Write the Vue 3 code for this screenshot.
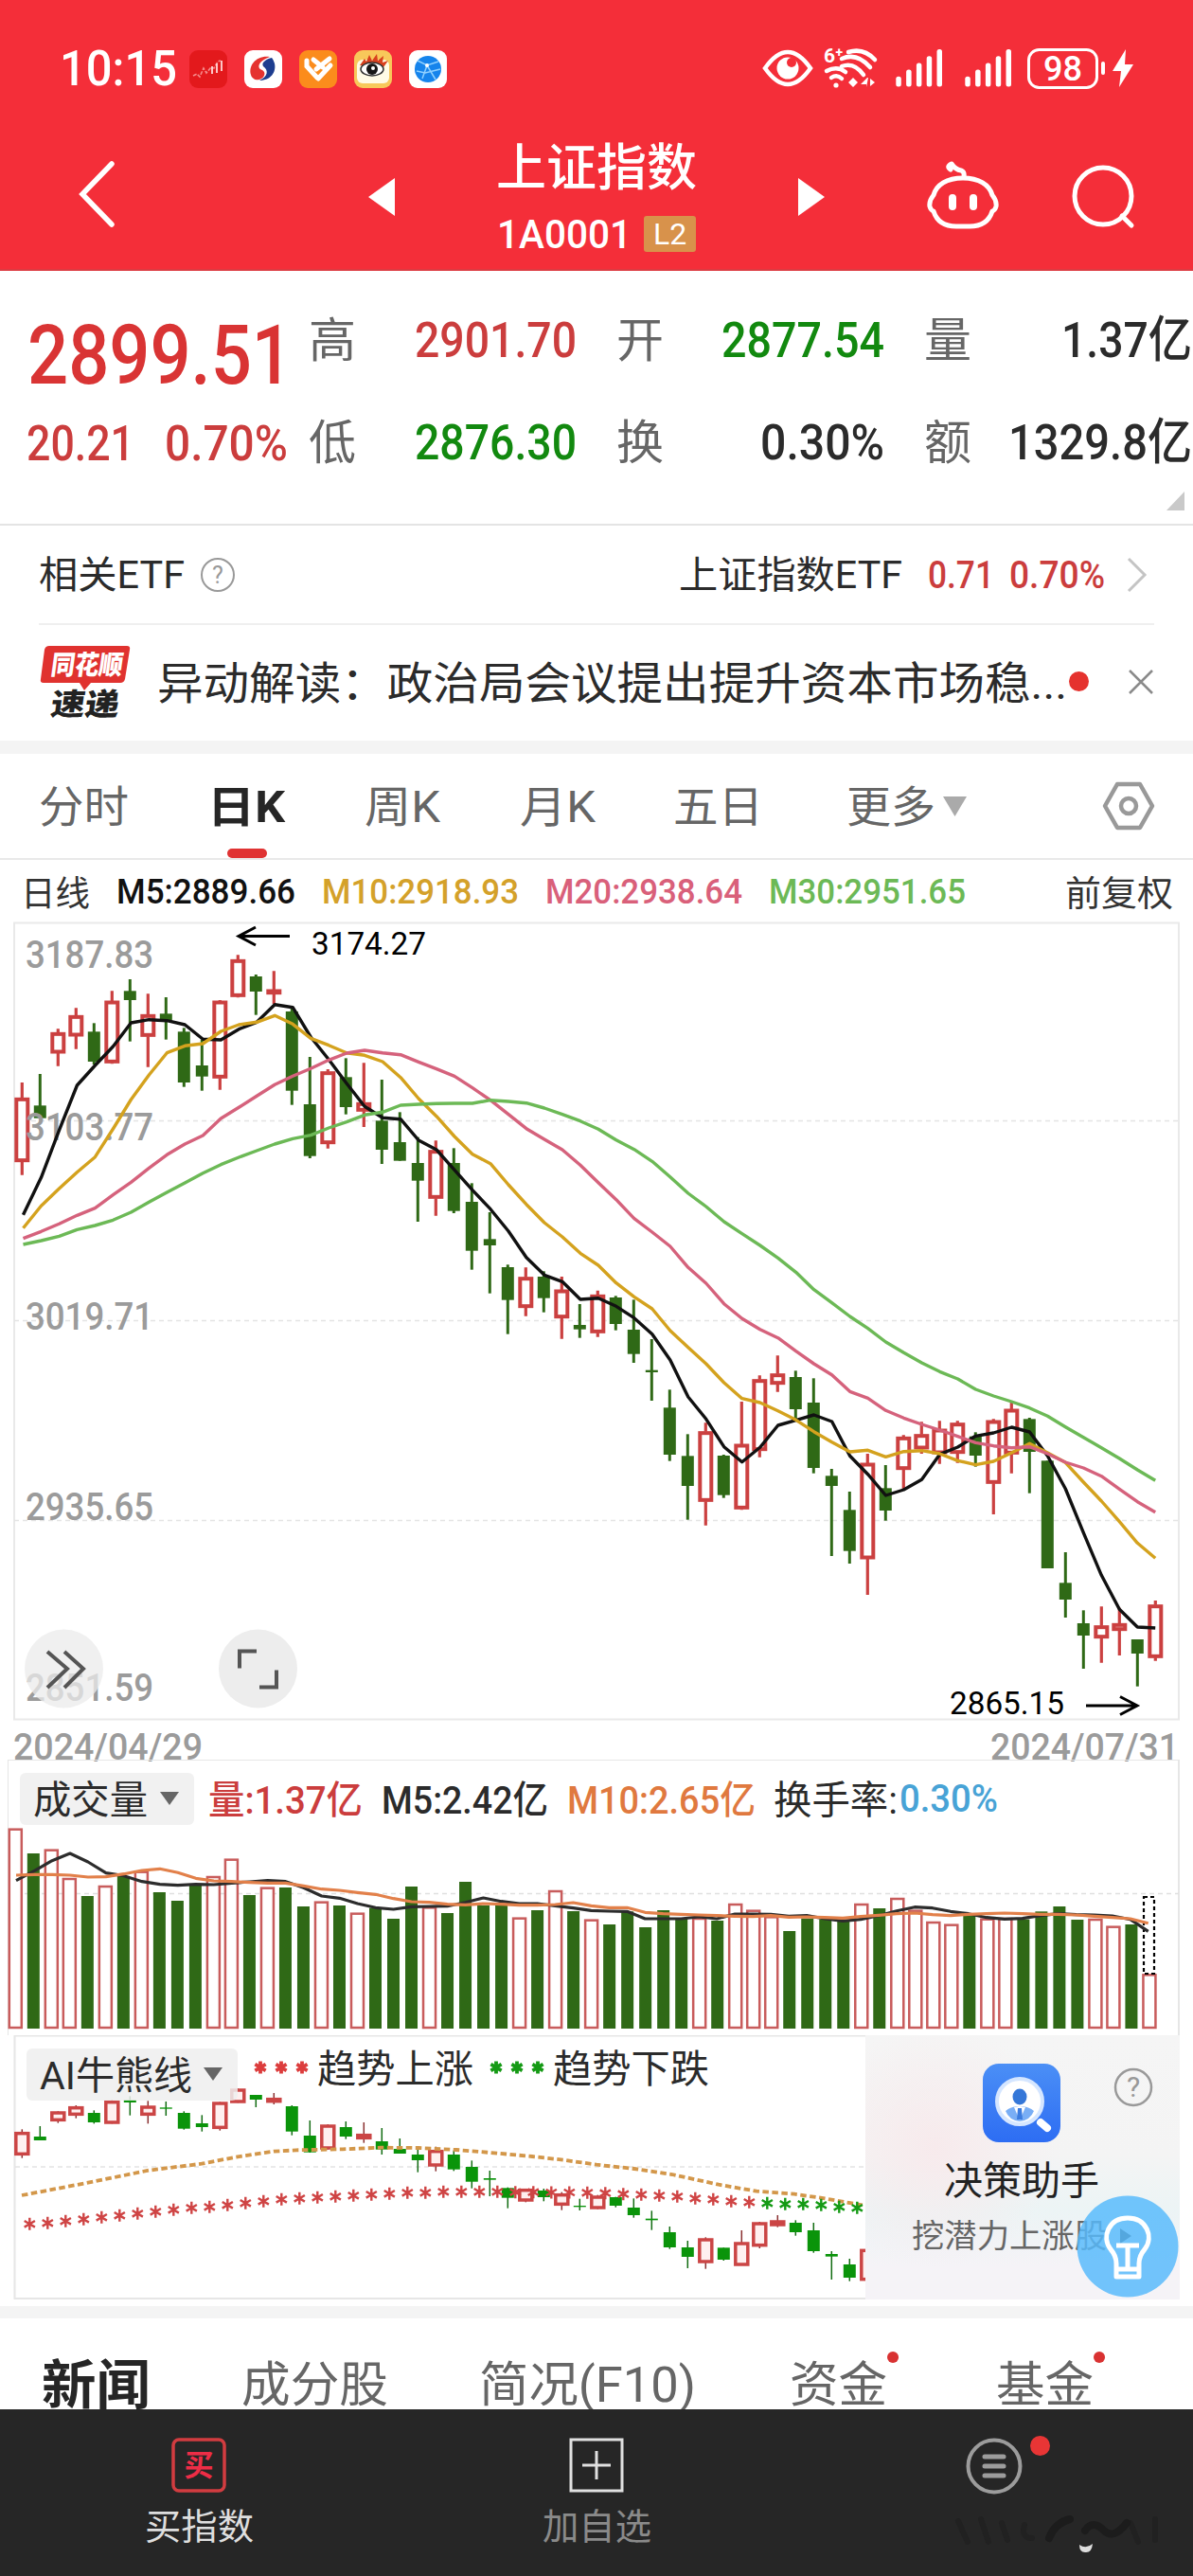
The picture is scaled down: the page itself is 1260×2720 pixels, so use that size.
<template>
  <div class="phone">
    <header class="top">
      <div class="status">
        <span v-fit="124" class="clock">10:15</span>
        <div class="apps">
          <svg class="app" viewBox="0 0 40 40">
            <rect width="40" height="40" rx="9" fill="#e3191c" />
            <path d="M4 27l4-2 3 3 4-9 3 5 5-6 3 1 4-7 3-1" fill="none" stroke="#f58a8a" stroke-width="1.6" stroke-dasharray="4 1.5" />
            <path d="M24 25v-8M29 24V14M34 22V11" stroke="#ffd9d9" stroke-width="1.8" />
          </svg>
          <svg class="app" viewBox="0 0 40 40">
            <rect width="40" height="40" rx="9" fill="#fff" />
            <path d="M27 7C13 5 4 16 7 26c1 4 5 6 9 5 6-2 7-8 3-10-6-2-5-9 8-14z" fill="#e5322f" />
            <path d="M29 8c-8 2-11 6-9 9 6 4 5 11-4 15 12 0 18-9 16-18-1-3-2-5-3-6z" fill="#1d3d8f" />
          </svg>
          <svg class="app" viewBox="0 0 40 40">
            <rect width="40" height="40" rx="9" fill="#fb8c1c" />
            <path d="M8 11v6l11 12M15 10l10 8M32 9L18 20M33 16L20 30" fill="none" stroke="#fff" stroke-width="5" stroke-linecap="round" />
          </svg>
          <svg class="app" viewBox="0 0 40 40">
            <rect width="40" height="40" rx="9" fill="#f8c85a" />
            <rect x="3" y="10" width="34" height="25" rx="6" fill="#fffbe6" />
            <path d="M6 16l5-7 2 3 3-7 3 6 5-7 1 7 6-5-1 7 6-2-5 7z" fill="#d9401e" />
            <ellipse cx="19" cy="20" rx="12" ry="7" fill="#fff" stroke="#333" stroke-width="1.5" />
            <circle cx="19" cy="20" r="6" fill="#161616" />
            <circle cx="20" cy="19" r="2" fill="#fff" />
          </svg>
          <svg class="app" viewBox="0 0 40 40">
            <rect width="40" height="40" rx="9" fill="#fff" />
            <circle cx="20" cy="20" r="14" fill="#1684ec" />
            <path d="M9 11l10 5 12-4M19 16l-5 14M19 16l9 15M8 22l9 2 16-4" fill="none" stroke="#8fd0ff" stroke-width="1.5" />
            <circle cx="19" cy="16" r="2" fill="#fff" />
          </svg>
        </div>
        <svg class="system" viewBox="800 48 400 50" width="400" height="50">
          <path d="M808 72q24-34 48 0q-24 34-48 0z" fill="none" stroke="#fff" stroke-width="4.5" />
          <circle cx="832" cy="72" r="11.5" fill="#fff" />
          <circle cx="836" cy="66" r="5" fill="#f42e39" />
          <text x="870" y="66" class="gen">6⁺</text>
          <g fill="none" stroke="#fff" stroke-width="4.5" stroke-linecap="round">
            <path d="M896 55q16-5 28 8M889 62q16-7 30 9M889 70q13-5 23 9M873 75q11-6 20 1M878 82q6-4 11 1" />
          </g>
          <circle cx="883" cy="90" r="2.6" fill="#fff" />
          <path d="M896 87l5-5 5 5-5 5zM916 82l-7 7h6v3l2-10zM919 82v9M919 83l5 4-5 4" fill="#fff" />
          <g fill="#fff">
            <rect v-for="n in 5" :key="'a' + n" :x="935.5 + n * 10.8" :y="88 - n * 7.2" width="5.5" :height="3.5 + n * 7.2" rx="2.5" />
            <rect v-for="n in 5" :key="'b' + n" :x="1008.5 + n * 10.8" :y="88 - n * 7.2" width="5.5" :height="3.5 + n * 7.2" rx="2.5" />
          </g>
          <rect x="1086.5" y="52.5" width="72" height="40" rx="11" fill="none" stroke="#fff" stroke-width="3" />
          <path d="M1165 67v10" stroke="#fff" stroke-width="4" stroke-linecap="round" />
          <text x="1122.5" y="85" class="battery" text-anchor="middle" textLength="41" lengthAdjust="spacingAndGlyphs">98</text>
          <path d="M1189 52l-14 23h9l-2 17 15-24h-9z" fill="#fff" />
        </svg>
      </div>
      <nav class="nav">
        <svg class="back" width="44" height="76" viewBox="0 0 44 76"><path d="M38 6L7 38l31 32" fill="none" stroke="#fff" stroke-width="5.5" stroke-linecap="round" /></svg>
        <svg class="prev" width="28" height="40" viewBox="0 0 28 40"><path d="M28 0v40L0 20z" fill="#fff" /></svg>
        <div class="heading">
          <h1 v-fit="214">上证指数</h1>
          <div class="code"><span v-fit="142">1A0001</span><em>L2</em></div>
        </div>
        <svg class="next" width="28" height="40" viewBox="0 0 28 40"><path d="M0 0v40l28-20z" fill="#fff" /></svg>
        <svg class="robot" width="76" height="72" viewBox="0 0 76 72" fill="none" stroke="#fff" stroke-width="5" stroke-linecap="round" stroke-linejoin="round">
          <path d="M39 17q1-6-3-7-6-1-10-7q-6 3-1 6" />
          <path d="M38 18C21 18 10 25 7 36q-5 6-4 12 1 4 4 5q5 16 24 16h14q19 0 24-16 3-1 4-5 1-6-4-12C66 25 55 18 38 18z" />
          <path d="M27 39v9M49 39v9" stroke-width="8" />
        </svg>
        <svg class="search" width="70" height="70" viewBox="0 0 70 70" fill="none" stroke="#fff" stroke-width="5" stroke-linecap="round">
          <circle cx="34" cy="34" r="30" /><path d="M54 55l10 10" />
        </svg>
      </nav>
    </header>

    <section class="quote">
      <div class="last">
        <div class="row"><b v-fit="280" class="price">2899.51</b></div>
        <div class="row">
          <span v-fit="114" class="num">20.21</span><span v-fit="130" class="num percent">0.70%</span>
        </div>
      </div>
      <div class="metrics">
        <div v-for="m in metrics" :key="m.label" class="metric">
          <span class="label">{{ m.label }}</span>
          <span v-fit="m.width" class="num" :class="m.tone">{{ m.value }}</span>
        </div>
      </div>
      <i class="corner"></i>
    </section>

    <section class="etf">
      <span v-fit="154" class="cjk">相关ETF</span>
      <svg class="help" width="38" height="38" viewBox="0 0 38 38"><circle cx="19" cy="19" r="17" fill="none" stroke="#999" stroke-width="2" /><text x="19" y="28" text-anchor="middle" class="qm">?</text></svg>
      <span v-fit="236" class="name cjk">上证指数ETF</span>
      <span v-fit="70" class="up value">0.71</span>
      <span v-fit="101" class="up pct">0.70%</span>
      <svg class="chev" width="24" height="40" viewBox="0 0 24 40"><path d="M3 3l17 17L3 37" fill="none" stroke="#c4c4c4" stroke-width="3" /></svg>
    </section>

    <section class="news">
      <svg width="98" height="80" viewBox="0 0 98 80">
        <path d="M11 1h82q4 0 3 4l-5 31q-1 4-5 4H55l-7 8-5-8H5q-4 0-3-4L6 5q1-4 5-4z" fill="#e0322f" />
        <text x="16" y="31" class="logo-a" transform="skewX(-8)" textLength="76" lengthAdjust="spacingAndGlyphs">同花顺</text>
        <text x="22" y="74" class="logo-b" transform="skewX(-8)" textLength="72" lengthAdjust="spacingAndGlyphs">速递</text>
      </svg>
      <p v-fit="961">异动解读：政治局会议提出提升资本市场稳...</p>
      <i class="dot"></i>
      <svg class="close" width="28" height="28" viewBox="0 0 28 28"><path d="M2 2l24 24M26 2L2 26" stroke="#8a8a8a" stroke-width="2.5" /></svg>
    </section>

    <section class="periods">
      <span v-for="p in periods" :key="p.name" v-fit="p.width" :class="{ active: p.active }" :style="{ marginLeft: p.gap + 'px' }">{{ p.name }}</span>
      <svg class="more" width="25" height="21" viewBox="0 0 25 21"><path d="M0 0h25L12.5 21z" fill="#aaa" /></svg>
      <svg class="setting" width="56" height="52" viewBox="0 0 56 52" fill="none" stroke="#999" stroke-width="4.5" stroke-linejoin="round">
        <path d="M16 3h24l13 23-13 23H16L3 26z" /><circle cx="28" cy="26" r="8" />
      </svg>
    </section>
    <div class="underline"></div>

    <section class="averages">
      <span v-fit="73" class="kind">日线</span>
      <span v-for="a in averages" :key="a.text" v-fit="a.width" class="ma" :style="{ color: a.color }">{{ a.text }}</span>
      <span v-fit="114" class="adjust">前复权</span>
    </section>

    <section class="kline">
      <svg width="1260" height="884" viewBox="0 974 1260 884">
        <rect x="15" y="974.5" width="1230" height="841" fill="none" stroke="#e9e9e9" stroke-width="2" />
        <path d="M15 1183.5h1230M15 1394.5h1230M15 1605.5h1230" stroke="#e4e4e4" stroke-width="1.5" stroke-dasharray="5 4" />
        <g v-for="(c, i) in candles" :key="i">
          <template v-if="c[0] === 'r'">
            <path :d="wick(i, 960, c)" stroke="#cb4040" stroke-width="3.2" />
            <rect :x="px(i) - 6" :y="960 + c[2] / 3 + 1.5" width="12" :height="Math.max((c[3] - c[2]) / 3 - 3, 1)" fill="#fff" stroke="#cb4040" stroke-width="4" />
          </template>
          <template v-else>
            <path :d="`M${px(i)} ${960 + c[1] / 3}V${960 + c[4] / 3}`" stroke="#2f6916" stroke-width="3" />
            <rect :x="px(i) - 6.5" :y="960 + c[2] / 3" width="13" :height="(c[3] - c[2]) / 3" fill="#2f6916" />
          </template>
        </g>
        <text v-for="s in scale" :key="s.text" x="27" :y="s.y" class="axis" textLength="135" lengthAdjust="spacingAndGlyphs">{{ s.text }}</text>
        <g fill="none" stroke-width="3.4" stroke-linejoin="round">
          <polyline :points="line(ma5, 24.5, 960)" stroke="#111" />
          <polyline :points="line(ma10, 24.5, 960)" stroke="#d4a21e" />
          <polyline :points="line(ma20, 24.5, 960)" stroke="#d5627c" />
          <polyline :points="line(ma30, 24.5, 960)" stroke="#6cb956" />
        </g>
        <g fill="none" stroke="#000" stroke-width="3">
          <path d="M306 988.5h-54M270 979l-18 9.5 18 9.5M1147 1801h54M1183 1791.5l18 9.5-18 9.5" />
        </g>
        <text x="329" y="1008" class="mark" textLength="121" lengthAdjust="spacingAndGlyphs">3174.27</text>
        <text x="1003" y="1810" class="mark" textLength="121" lengthAdjust="spacingAndGlyphs">2865.15</text>
        <circle cx="67.5" cy="1762" r="41.5" fill="#ebebeb" fill-opacity=".75" />
        <circle cx="272.5" cy="1762" r="41.5" fill="#ededed" />
        <g fill="none" stroke="#555" stroke-width="4">
          <path d="M50 1744l21 18-21 20M68 1744l20 18-20 20" />
          <path d="M271 1743.5h-18v18M274 1781.5h18v-18" />
        </g>
        <text x="14" y="1858" class="axis date" textLength="200" lengthAdjust="spacingAndGlyphs">2024/04/29</text>
        <text x="1046" y="1858" class="axis date" textLength="199" lengthAdjust="spacingAndGlyphs">2024/07/31</text>
      </svg>
    </section>

    <section class="volume">
      <div class="legend">
        <div class="pill"><span v-fit="121" class="cjk">成交量</span><i></i></div>
        <span v-fit="163" class="cjk c-vol">量:1.37亿</span>
        <span v-fit="176" class="cjk c-m5">M5:2.42亿</span>
        <span v-fit="199" class="cjk c-m10">M10:2.65亿</span>
        <span v-fit="131" class="cjk c-turn">换手率:</span>
        <span v-fit="104" class="c-rate">0.30%</span>
      </div>
      <svg width="1260" height="219" viewBox="0 1930 1260 219">
        <path d="M8 1999.5h1237" stroke="#e0e0e0" stroke-width="1.5" stroke-dasharray="5 4" />
        <template v-for="(v, i) in volumes" :key="i">
          <rect v-if="candles[i][0] === 'r'" :x="vx(i) - 6.5" :y="1861 + v / 3" width="13" :height="280 - v / 3" fill="#fff" stroke="#c85c5c" stroke-width="2.5" />
          <rect v-else :x="vx(i) - 6.5" :y="1860 + v / 3" width="13" :height="282 - v / 3" fill="#2f6916" />
        </template>
        <rect x="1208" y="2003" width="11" height="81" fill="none" stroke="#000" stroke-width="2.2" stroke-dasharray="4 3" />
        <g fill="none" stroke-width="3.2" stroke-linejoin="round">
          <polyline :points="line(vol5, 17, 1860)" stroke="#2c2c2c" />
          <polyline :points="line(vol10, 17, 1860)" stroke="#e2804a" />
        </g>
      </svg>
    </section>

    <section class="trend">
      <svg class="plot" width="914" height="286" viewBox="0 2149 914 286">
        <path d="M914 2149.5H15.5V2427H914" fill="none" stroke="#e6e6e6" stroke-width="2" />
        <path d="M16 2288h898" stroke="#e4e4e4" stroke-width="1.5" stroke-dasharray="5 4" />
        <g v-for="(c, i) in trendCandles" :key="i">
          <path :d="`M${px(i)} ${2140 + c[0] / 3}V${2140 + c[3] / 3}`" :stroke="candles[i][0] === 'r' ? '#8a3030' : '#126c12'" stroke-width="1.5" />
          <rect v-if="candles[i][0] === 'r'" :x="px(i) - 6.5" :y="2141 + c[1] / 3" width="13" :height="Math.max((c[2] - c[1]) / 3 - 2, 2)" fill="#fff0f0" stroke="#cb4545" stroke-width="3.5" />
          <rect v-else :x="px(i) - 6.5" :y="2140 + c[1] / 3" width="13" :height="(c[2] - c[1]) / 3" fill="#0a940a" />
        </g>
        <polyline :points="slow" fill="none" stroke="#d3974a" stroke-width="3.8" stroke-dasharray="6.5 3.5" />
        <path v-for="(s, i) in stars" :key="'s' + i" :d="star(31.3 + i * 19, 2140 + s / 3)" :stroke="i > 40 ? '#149a14' : '#cf4444'" stroke-width="2.4" />
      </svg>
      <div class="legend">
        <div class="pill"><span v-fit="161" class="cjk">AI牛熊线</span><i></i></div>
        <svg class="stars" width="60" height="18" viewBox="0 0 60 18"><path v-for="n in 3" :key="n" :d="star(n * 22 - 16, 9)" stroke="#dc3c3c" stroke-width="3.8" /></svg>
        <span v-fit="165" class="cjk rise">趋势上涨</span>
        <svg class="stars" width="60" height="18" viewBox="0 0 60 18"><path v-for="n in 3" :key="n" :d="star(n * 22 - 16, 9)" stroke="#149a14" stroke-width="3.8" /></svg>
        <span v-fit="165" class="cjk rise">趋势下跌</span>
      </div>
      <aside class="helper">
        <svg class="helper-icon" width="82" height="83" viewBox="0 0 82 83">
          <defs>
            <linearGradient id="blue" x1="0" y1="0" x2="0" y2="1"><stop offset="0" stop-color="#4b8ff6" /><stop offset="1" stop-color="#2d6df3" /></linearGradient>
          </defs>
          <rect width="82" height="83" rx="17" fill="url(#blue)" />
          <circle cx="39" cy="40" r="24" fill="#fff" stroke="#d5e6ff" stroke-width="4" />
          <path d="M24 50q7-6 15-4 8-2 15 4-4 10-15 11-11-1-15-11z" fill="#79aef5" />
          <path d="M33 46l6 14 6-14z" fill="#fff" />
          <path d="M37 47h4l1 12h-6z" fill="#3c7cdf" />
          <ellipse cx="39" cy="35" rx="7.5" ry="8.5" fill="#3577d8" />
          <path d="M61 62l7 6" stroke="#fff" stroke-width="8" stroke-linecap="round" />
        </svg>
        <svg class="ask" width="42" height="42" viewBox="0 0 42 42"><circle cx="21" cy="21" r="19" fill="none" stroke="#999" stroke-width="2.5" /><text x="21" y="31" text-anchor="middle" class="qm big">?</text></svg>
        <strong v-fit="164">决策助手</strong>
        <div class="hint"><span v-fit="206">挖潜力上涨股</span><i></i></div>
      </aside>
      <svg class="bulb" width="108" height="108" viewBox="0 0 108 108">
        <circle cx="54" cy="54" r="53.5" fill="#57bafc" fill-opacity=".84" />
        <g fill="none" stroke="#fff" stroke-width="5" stroke-linejoin="round">
          <path d="M42 72q0-8-6-15c-10-13-2-33 18-33s28 20 18 33q-6 7-6 15v14H42zM42 78h24M42 53h24M54 53v24" />
        </g>
      </svg>
    </section>

    <section class="tabs">
      <span v-for="t in tabs" :key="t.name" v-fit="t.width" :class="{ on: t.on, badge: t.badge }" :style="{ marginLeft: t.gap + 'px' }">{{ t.name }}</span>
    </section>

    <footer class="bottom">
      <div class="item">
        <svg width="58" height="58" viewBox="0 0 58 58"><rect x="2" y="2" width="54" height="54" rx="6" fill="none" stroke="#d23c40" stroke-width="3.5" /><text x="29" y="40" text-anchor="middle" class="buy">买</text></svg>
        <span v-fit="115">买指数</span>
      </div>
      <div class="item grey">
        <svg width="58" height="58" viewBox="0 0 58 58" fill="none" stroke="#e0e0e0" stroke-width="3"><path d="M2 2h54v54H2zM14 29h30M29 14v30" /></svg>
        <span v-fit="115">加自选</span>
      </div>
      <div class="item menu">
        <svg width="60" height="60" viewBox="0 0 60 60" fill="none" stroke="#9c9c9c"><circle cx="30" cy="30" r="27.5" stroke-width="4" /><path d="M20 20h20M20 30h20M20 40h20" stroke-width="5" stroke-linecap="round" /></svg>
        <i></i>
        <svg class="smudge" width="230" height="50" viewBox="0 0 230 50">
          <g fill="none" stroke="#212121" stroke-linecap="round">
            <path d="M6 12l10 22M30 10l8 24M52 14l6 18M76 16q-4 14 8 14M188 14l8 20M214 10v22" stroke-width="6" />
            <path d="M102 30q6-16 22-20M140 22q8-12 20 0 10 10 24-8" stroke="#1c1c1c" stroke-width="8" />
          </g>
          <path d="M134 37q7 5 14-1-1 10-8 9-6 0-6-8z" fill="#ddd" />
        </svg>
      </div>
    </footer>
  </div>
</template>

<script setup>
// Squeezes or stretches a label to its slot width, glyphs included
const vFit = {
  mounted(el, { value }) {
    const w = el.getBoundingClientRect().width
    el.style.transform = `scaleX(${value / w})`
    el.style.marginRight = value - w + 'px'
  }
}

const metrics = [
  { label: '高', value: '2901.70', width: 171, tone: 'up' },
  { label: '开', value: '2877.54', width: 172, tone: 'down' },
  { label: '量', value: '1.37亿', width: 138 },
  { label: '低', value: '2876.30', width: 171, tone: 'down' },
  { label: '换', value: '0.30%', width: 131 },
  { label: '额', value: '1329.8亿', width: 194 }
]

const periods = [
  { name: '分时', width: 95, gap: 41 },
  { name: '日K', width: 82, gap: 83, active: true },
  { name: '周K', width: 80, gap: 84 },
  { name: '月K', width: 80, gap: 84 },
  { name: '五日', width: 95, gap: 82 },
  { name: '更多', width: 94, gap: 88 }
]

const averages = [
  { text: 'M5:2889.66', width: 189, color: '#111' },
  { text: 'M10:2918.93', width: 208, color: '#d4a12a' },
  { text: 'M20:2938.64', width: 208, color: '#d9607a' },
  { text: 'M30:2951.65', width: 208, color: '#6cb956' }
]

const tabs = [
  { name: '新闻', width: 115, gap: 44, on: true },
  { name: '成分股', width: 155, gap: 96 },
  { name: '简况(F10)', width: 229, gap: 96 },
  { name: '资金', width: 103, gap: 99, badge: true },
  { name: '基金', width: 103, gap: 115, badge: true }
]

const scale = [
  { text: '3187.83', y: 1022 },
  { text: '3103.77', y: 1204 },
  { text: '3019.71', y: 1404 },
  { text: '2935.65', y: 1605 },
  { text: '2851.59', y: 1796 }
]

// [colour, high, body top, body bottom, low], three units per pixel
const candles = [
  ['r', 549, 598, 800, 842], ['g', 522, 622, 662, 662], ['r', 379, 391, 456, 497], ['r', 313, 337, 402, 443],
  ['g', 361, 388, 483, 492], ['r', 259, 291, 487, 490], ['g', 222, 259, 288, 419], ['r', 268, 334, 403, 500],
  ['g', 279, 331, 352, 413], ['g', 376, 388, 549, 563], ['g', 414, 495, 530, 575], ['r', 288, 291, 535, 572],
  ['r', 145, 160, 277, 280], ['g', 207, 213, 261, 335], ['r', 196, 255, 269, 300], ['g', 315, 324, 575, 620],
  ['g', 468, 618, 782, 789], ['r', 507, 515, 743, 758], ['g', 472, 532, 627, 650], ['r', 487, 613, 640, 690],
  ['g', 540, 670, 762, 807], ['g', 643, 738, 797, 797], ['g', 722, 804, 860, 990], ['r', 733, 764, 916, 971],
  ['g', 757, 804, 956, 963], ['g', 868, 927, 1082, 1142], ['g', 960, 1045, 1065, 1217], ['g', 1126, 1134, 1238, 1346],
  ['r', 1135, 1166, 1262, 1289], ['g', 1147, 1164, 1232, 1277], ['r', 1164, 1206, 1295, 1361], ['g', 1251, 1317, 1331, 1358],
  ['r', 1208, 1222, 1342, 1355], ['g', 1225, 1230, 1314, 1334], ['g', 1237, 1332, 1409, 1437], ['g', 1362, 1460, 1467, 1557],
  ['g', 1522, 1579, 1728, 1748], ['g', 1663, 1732, 1827, 1934], ['r', 1627, 1655, 1876, 1952], ['g', 1728, 1731, 1856, 1865],
  ['r', 1560, 1695, 1900, 1903], ['r', 1477, 1490, 1715, 1736], ['r', 1414, 1472, 1505, 1529], ['g', 1462, 1482, 1584, 1620],
  ['g', 1486, 1563, 1770, 1787], ['g', 1773, 1795, 1827, 2049], ['g', 1845, 1903, 2033, 2073], ['r', 1725, 1755, 2058, 2172],
  ['g', 1761, 1834, 1905, 1937], ['r', 1666, 1672, 1775, 1842], ['r', 1624, 1664, 1710, 1725], ['r', 1621, 1647, 1725, 1757],
  ['r', 1621, 1628, 1724, 1754], ['g', 1657, 1670, 1731, 1766], ['r', 1615, 1620, 1819, 1917], ['r', 1557, 1584, 1726, 1787],
  ['g', 1611, 1615, 1719, 1850], ['g', 1747, 1747, 2088, 2088], ['g', 2037, 2134, 2187, 2244], ['g', 2221, 2262, 2301, 2406],
  ['r', 2209, 2270, 2309, 2387], ['r', 2213, 2263, 2285, 2364], ['g', 2313, 2313, 2358, 2462], ['r', 2190, 2204, 2371, 2381]
]

const ma5 = [968, 850, 700, 558, 495, 435, 360, 350, 353, 366, 412, 414, 380, 358, 302, 311, 405, 476, 552, 625, 661, 665, 732, 762, 826, 890, 950, 1020, 1103, 1159, 1180, 1236, 1232, 1258, 1295, 1346, 1428, 1545, 1615, 1703, 1751, 1705, 1635, 1619, 1602, 1623, 1732, 1790, 1857, 1839, 1807, 1727, 1704, 1669, 1659, 1641, 1656, 1732, 1836, 1975, 2110, 2218, 2274, 2277]
const ma10 = [1010, 940, 885, 833, 785, 696, 603, 525, 455, 433, 426, 387, 366, 358, 337, 364, 409, 431, 455, 463, 483, 533, 600, 656, 720, 776, 806, 873, 935, 993, 1038, 1090, 1128, 1184, 1228, 1266, 1335, 1388, 1440, 1500, 1550, 1563, 1589, 1618, 1655, 1688, 1719, 1714, 1735, 1718, 1715, 1725, 1747, 1760, 1749, 1722, 1693, 1722, 1753, 1815, 1875, 1940, 2008, 2056]
const ma20 = [1043, 1021, 997, 970, 947, 905, 865, 820, 778, 744, 717, 663, 628, 592, 556, 529, 505, 478, 456, 447, 455, 461, 484, 506, 529, 566, 605, 650, 695, 729, 762, 811, 866, 920, 980, 1023, 1068, 1135, 1185, 1250, 1297, 1331, 1358, 1400, 1440, 1475, 1528, 1549, 1588, 1612, 1632, 1650, 1670, 1690, 1700, 1706, 1703, 1725, 1752, 1770, 1796, 1837, 1877, 1910]
const ma30 = [1062, 1050, 1036, 1015, 1002, 985, 960, 928, 897, 867, 836, 809, 786, 765, 744, 727, 716, 693, 674, 652, 643, 621, 618, 616, 615, 615, 605, 609, 614, 630, 650, 671, 697, 731, 761, 799, 848, 900, 942, 990, 1028, 1065, 1105, 1150, 1205, 1247, 1290, 1328, 1371, 1405, 1437, 1465, 1488, 1521, 1542, 1560, 1580, 1606, 1640, 1673, 1706, 1740, 1776, 1810]

const volumes = [212, 291, 278, 369, 426, 393, 363, 347, 414, 441, 387, 363, 308, 423, 398, 399, 459, 443, 456, 479, 464, 498, 396, 460, 480, 381, 456, 456, 494, 471, 408, 474, 500, 516, 475, 525, 471, 495, 495, 504, 450, 470, 490, 537, 497, 500, 505, 450, 465, 432, 470, 507, 515, 488, 497, 495, 500, 475, 459, 501, 498, 521, 516, 673]
const vol5 = [377, 347, 314, 291, 318, 353, 362, 380, 389, 392, 389, 390, 385, 381, 377, 380, 400, 426, 433, 450, 463, 468, 460, 459, 458, 446, 432, 443, 450, 450, 457, 464, 472, 474, 475, 498, 498, 498, 492, 498, 483, 483, 484, 490, 488, 498, 505, 500, 488, 473, 461, 464, 475, 482, 494, 499, 497, 488, 482, 485, 486, 489, 500, 538]
const vol10 = [360, 358, 358, 360, 366, 365, 356, 345, 340, 352, 370, 378, 380, 383, 385, 385, 394, 404, 408, 415, 421, 434, 444, 446, 452, 454, 450, 452, 455, 455, 453, 447, 457, 463, 463, 478, 482, 484, 486, 488, 490, 491, 488, 493, 492, 494, 496, 491, 487, 482, 480, 485, 488, 484, 482, 480, 482, 484, 484, 486, 490, 494, 498, 512]

const trendCandles = [
  [325, 335, 406, 416], [315, 348, 360, 360], [268, 270, 298, 305], [249, 254, 280, 290], [265, 273, 303, 307], [232, 236, 306, 307],
  [220, 232, 240, 281], [235, 252, 280, 307], [237, 256, 260, 282], [268, 273, 323, 326], [280, 306, 318, 332], [238, 240, 322, 329],
  [196, 198, 240, 241], [216, 216, 231, 255], [210, 227, 239, 246], [249, 252, 332, 344], [297, 345, 398, 399], [309, 312, 387, 389],
  [300, 318, 348, 356], [303, 341, 355, 368], [321, 363, 389, 405], [354, 387, 402, 402], [378, 405, 423, 461], [380, 392, 441, 458],
  [392, 405, 452, 457], [424, 444, 491, 512], [456, 480, 485, 537], [509, 511, 542, 575], [513, 515, 552, 556], [513, 519, 540, 553],
  [524, 530, 565, 581], [545, 567, 571, 582], [533, 537, 576, 578], [539, 540, 567, 572], [544, 573, 597, 605], [583, 608, 613, 644],
  [633, 651, 699, 704], [678, 699, 729, 765], [667, 672, 747, 767], [700, 700, 738, 741], [645, 684, 756, 756], [618, 621, 695, 702],
  [597, 615, 630, 635], [613, 621, 651, 662], [621, 645, 711, 716], [711, 720, 728, 801], [735, 753, 795, 806], [702, 706, 803, 803]
]
const slow = '23,2318 60,2311 100,2303.3 157,2291.7 213,2284.7 249,2277.7 289,2271.7 313,2270.3 362,2269.3 402,2267.7 442,2268 482,2270 522,2273.3 562,2277 595,2280.7 630,2285.7 670,2290 710,2296 759,2306.7 799,2313.7 839,2316.7 871,2321.3 914,2329'
const stars = [625, 622, 616, 610, 604, 598, 592, 586, 580, 574, 571, 565, 559, 553, 547, 544, 541, 538, 535, 532, 529, 526, 526, 523, 523, 523, 523, 524, 524, 525, 525, 526, 527, 530, 532, 535, 538, 544, 547, 553, 556, 559, 562, 562, 565, 571, 574]

const px = (i) => 23.3 + i * 19
const vx = (i) => 16.3 + i * 19.01
const line = (list, x0, y0) => list.map((v, i) => `${(x0 + i * 18.98).toFixed(1)},${(y0 + v / 3).toFixed(1)}`).join(' ')
const wick = (i, y0, c) => `M${px(i)} ${y0 + c[1] / 3}V${y0 + c[2] / 3}M${px(i)} ${y0 + c[3] / 3}V${y0 + c[4] / 3}`
const star = (x, y) => `M${x} ${y - 6.5}v13M${x - 5.6} ${y - 3.3}l11.2 6.6M${x + 5.6} ${y - 3.3}l-11.2 6.6`
</script>

<style>
body {
  margin: 0;
  background: #fff;
}
</style>

<style scoped>
.phone {
  width: 1260px;
  height: 2720px;
  overflow: hidden;
  display: flex;
  flex-direction: column;
  background: #fff;
  color: #2b2b2b;
  font-family: Roboto, "Noto Sans CJK SC", sans-serif;
  white-space: nowrap;
}
.phone > * {
  flex-shrink: 0;
  box-sizing: border-box;
}
span, h1, b, p, strong {
  display: block;
  flex-shrink: 0;
  margin: 0;
  transform-origin: left center;
}
svg {
  display: block;
  flex-shrink: 0;
  overflow: visible;
}
.up { color: #cb3d3d; }
.down { color: #12890f; }
/* CJK glyphs sit low in the Roboto line box */
.cjk { padding-bottom: 5px; }

/* header */
.top {
  height: 286px;
  background: #f42e39;
  border-bottom: 2px solid #dc3b42;
  color: #fff;
}
.status {
  height: 100px;
  padding: 46px 60px 0 63px;
  box-sizing: border-box;
  display: flex;
  align-items: center;
}
.clock { font-size: 52px; font-weight: 500; line-height: 54px; }
.apps { display: flex; gap: 18px; margin-left: 13px; }
.app { width: 40px; height: 40px; }
.system { margin-left: auto; }
.gen { font-size: 21px; font-weight: 700; fill: #fff; }
.battery { font-size: 37px; font-weight: 500; fill: #fff; }
.nav {
  display: flex;
  height: 184px;
  padding-left: 80px;
  align-items: flex-start;
}
.back { margin-top: 67px; }
.prev { margin: 88px 0 0 265px; }
.heading { margin: 46px 0 0 107px; width: 214px; }
.heading h1 { font-size: 53px; font-weight: 500; line-height: 64px; }
.code { display: flex; align-items: center; height: 73px; padding-left: 1px; }
.code span { font-size: 43px; font-weight: 500; line-height: 50px; }
.code em {
  width: 55px;
  height: 38px;
  margin-left: 13px;
  border-radius: 3px;
  background: #d8924b;
  font: normal 32px/38px Roboto;
  text-align: center;
}
.next { margin: 88px 0 0 105px; }
.robot { margin: 70px 0 0 108px; }
.search { margin: 73px 0 0 76px; }

/* quote */
.quote {
  position: relative;
  height: 269px;
  display: flex;
  border-bottom: 2px solid #e4e4e4;
  padding-top: 20px;
}
.last { width: 326px; padding-left: 28px; box-sizing: border-box; }
.row { display: flex; height: 108px; align-items: center; }
.row:first-child { box-sizing: border-box; padding-top: 31px; padding-left: 1px; }
.row:last-child { padding-top: 1px; }
.price { font-size: 87px; font-weight: 500; color: #d93434; line-height: 77px; }
.last .num { color: #cb3d3d; }
.percent { margin-left: 32px; }
.num { font-size: 52px; font-weight: 500; line-height: 60px; }
.metrics {
  width: 934px;
  display: grid;
  grid-template-columns: 283px 283px 283px;
  grid-template-rows: 108px 108px;
  column-gap: 42px;
}
.metric { display: flex; align-items: center; justify-content: space-between; }
.metric .label { font-size: 50px; color: #666; line-height: 60px; }
.corner {
  position: absolute;
  right: 9px;
  bottom: 14px;
  border: solid transparent;
  border-width: 20px 0 0 19px;
  border-bottom: 20px solid #c9c9c9;
  border-top: 0;
}

/* etf row */
.etf {
  height: 105px;
  margin: 0 41px;
  border-bottom: 2px solid #efefef;
  display: flex;
  align-items: center;
  font-size: 40px;
}
.help { margin-left: 16px; }
.qm { font-size: 25px; fill: #999; }
.qm.big { font-size: 30px; }
.name { margin-left: auto; }
.value { margin-left: 27px; font-weight: 500; padding-top: 2px; }
.pct { margin-left: 16px; font-weight: 500; padding-top: 2px; }
.chev { margin: 0 6px 0 22px; }

/* news row */
.news {
  height: 136px;
  padding-left: 41px;
  border-bottom: 14px solid #f4f4f4;
  display: flex;
  align-items: center;
}
.news p { font-size: 47px; margin-left: 27px; padding-bottom: 8px; }
.dot { width: 21px; height: 21px; border-radius: 50%; background: #e5322e; margin: 0 0 3px 2px; }
.close { margin: 0 0 3px 41px; }
.logo-a { font-size: 28px; font-weight: 900; fill: #fff; }
.logo-b { font-size: 32px; font-weight: 900; fill: #222; }

/* period tabs */
.periods {
  height: 110px;
  display: flex;
  align-items: center;
  font-size: 46px;
  color: #666;
}
.periods span { padding-bottom: 7px; }
.periods .active { color: #262626; font-weight: 700; }
.more { margin-left: 8px; }
.setting { margin: 0 40px 0 auto; }
.underline {
  height: 10px;
  width: 42px;
  margin: -10px 0 0 240px;
  border-radius: 5px;
  background: #e03333;
}
.averages {
  height: 68px;
  border-top: 2px solid #e9e9e9;
  padding: 0 21px 0 22px;
  display: flex;
  align-items: center;
  gap: 28px;
  font-size: 37px;
  color: #333;
}
.averages .ma { font-weight: 500; }
.adjust { margin-left: auto; }
.kline { height: 884px; }
.axis { font-size: 40px; font-weight: 500; fill: #9b9b9b; }
.date { font-size: 38px; }
.mark { font-size: 34px; fill: #000; }

/* volume */
.volume {
  height: 291px;
  width: 1238px;
  margin-left: 8px;
  border: 1px solid #e6e6e6;
  border-width: 1px 2px 0 1px;
}
.volume > svg { margin: 0 0 0 -9px; }
.legend {
  display: flex;
  align-items: center;
  font-size: 41px;
}
.volume .legend { height: 71px; padding: 9px 0 0 12px; box-sizing: border-box; }
.pill {
  display: flex;
  align-items: center;
  justify-content: space-between;
  box-sizing: border-box;
  width: 184px;
  height: 55px;
  padding: 0 16px 0 14px;
  border-radius: 6px;
  background: rgba(238, 238, 238, .85);
}
.pill i {
  border: solid transparent;
  border-width: 14px 10px 0;
  border-top-color: #666;
}
.c-vol, .c-m5, .c-m10, .c-rate { font-weight: 500; }
.c-vol { margin-left: 15px; color: #cb3d3d; }
.c-m5 { margin-left: 20px; }
.c-m10 { margin-left: 20px; color: #e0793f; }
.c-turn { margin-left: 19px; }
.c-rate { color: #48a3d6; margin-left: 2px; }

/* trend */
.trend {
  position: relative;
  height: 299px;
  border-bottom: 13px solid #f4f4f4;
}
.plot { position: absolute; left: 0; top: 0; overflow: hidden; }
.trend .legend { position: relative; padding: 4px 0 0 28px; height: 60px; }
.trend .pill { width: 223px; margin-top: 14px; }
.stars { margin-left: 18px; }
.rise { margin-left: 6px; }
.helper {
  position: absolute;
  left: 914px;
  top: 0;
  width: 332px;
  height: 279px;
  box-sizing: border-box;
  padding-top: 30px;
  display: flex;
  flex-direction: column;
  background: radial-gradient(circle at 22% 42%, #f7eaec, rgba(247, 234, 236, 0) 42%), linear-gradient(#f5f5f5 0, #f4f4f4 45%, #ecf4f5 66%, #f5f3f7 88%);
}
.helper-icon { margin-left: 124px; }
.ask { position: absolute; right: 28px; top: 34px; }
.helper strong { margin: 13px 0 0 83px; align-self: flex-start; font-size: 41px; font-weight: 400; line-height: 56px; color: #222; }
.hint { display: flex; align-items: center; margin: 5px 0 0 49px; font-size: 34px; line-height: 50px; color: #666; }
.hint i { margin-left: 14px; border: solid transparent; border-width: 8px 0 8px 12px; border-left-color: #444; }
.bulb { position: absolute; left: 1137px; top: 169px; }

/* content tabs */
.tabs {
  height: 96px;
  overflow: hidden;
  display: flex;
  font-size: 51px;
  line-height: 142px;
  color: #666;
}
.tabs span { position: relative; }
.tabs .on { font-size: 56px; font-weight: 700; color: #262626; }
.badge::after {
  content: "";
  position: absolute;
  right: -12px;
  top: 35px;
  width: 12px;
  height: 12px;
  border-radius: 50%;
  background: #d93232;
}

/* bottom bar */
.bottom {
  position: relative;
  height: 176px;
  display: grid;
  grid-template-columns: 1fr 1fr 1fr;
  background: #262626;
  color: #dedede;
}
.item {
  position: relative;
  display: flex;
  flex-direction: column;
  align-items: center;
  padding-top: 30px;
  font-size: 38px;
}
.item span { margin-top: 8px; line-height: 56px; }
.grey { color: #8a8a8a; }
.buy { font-size: 31px; font-weight: 700; fill: #ee2d46; }
.menu i {
  position: absolute;
  left: 248px;
  top: 28px;
  width: 21px;
  height: 21px;
  border-radius: 50%;
  background: #e83535;
}
.smudge { position: absolute; right: 24px; top: 106px; }
</style>
